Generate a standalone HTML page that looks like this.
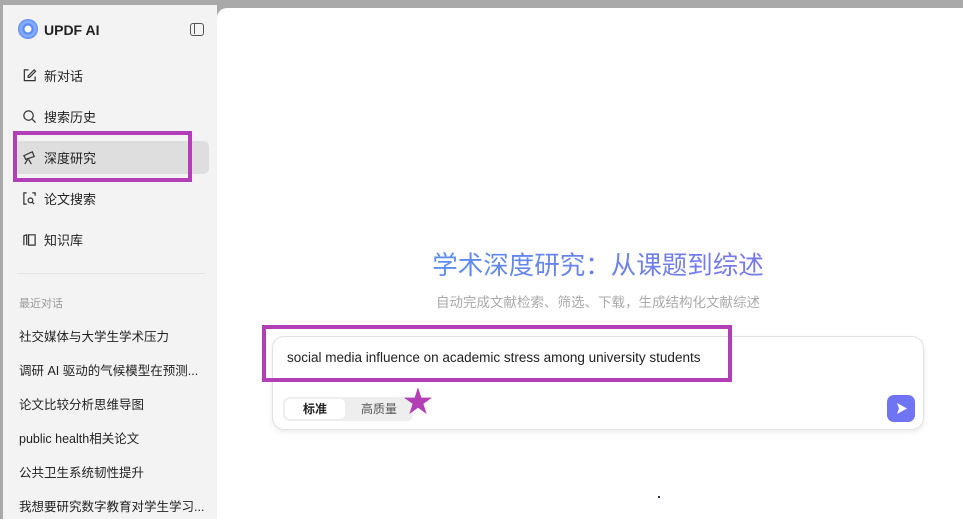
<!DOCTYPE html>
<html><head><meta charset="utf-8"><style>
*{margin:0;padding:0;box-sizing:border-box}
body{width:963px;height:519px;overflow:hidden;background:#a9a9a9;font-family:"Liberation Sans","Noto Sans CJK SC",sans-serif;position:relative}
.side{position:absolute;left:3px;top:5px;width:214px;height:514px;background:#f3f3f4}
.main{position:absolute;left:217px;top:8px;width:746px;height:511px;background:#fff;border-top-left-radius:10px}
.logo{position:absolute;left:15px;top:14px;width:20px;height:20px;border-radius:50%;background:radial-gradient(circle,#fff 0 3px,#4a7ef0 4px,#8fb3ff 7px,#5b8cf5 10px)}
.brand{position:absolute;left:41px;top:17px;font-weight:bold;font-size:14px;color:#222}
.coll{position:absolute;left:187px;top:18px;width:14px;height:13px;border:1.5px solid #555;border-radius:3px}
.coll:after{content:"";position:absolute;left:3px;top:0;width:0;height:10px;border-left:1.2px solid #555}
.item{position:absolute;left:19px;font-size:13px;color:#222;display:flex;align-items:center;gap:7px}
.item svg{width:15px;height:15px}
.sel{position:absolute;left:10px;top:136px;width:196px;height:33px;background:#dedede;border-radius:6px}
.hl{position:absolute;border:4px solid #b23fb5}
.sec{position:absolute;left:16px;top:290px;font-size:11px;color:#999}
.rec{position:absolute;left:16px;font-size:12.5px;color:#222}
.title{position:absolute;left:8px;width:746px;text-align:center;top:237px;font-size:25.5px;background:linear-gradient(90deg,#4a9af0,#8a6ae8);-webkit-background-clip:text;color:transparent}
.sub{position:absolute;left:8px;width:746px;text-align:center;top:283px;font-size:13.5px;color:#aaa}
.box{position:absolute;left:55px;top:328px;width:652px;height:94px;border:1px solid #e2e2e2;border-radius:12px;box-shadow:0 2px 6px rgba(0,0,0,.08);background:#fff}
.q{position:absolute;left:14px;top:13px;font-size:13.5px;color:#222}
.seg{position:absolute;left:10px;top:60px;width:130px;height:24px;background:#eee;border-radius:6px}
.seg .a{position:absolute;left:2px;top:2px;width:60px;height:20px;background:#fff;border-radius:5px;font-size:12px;font-weight:bold;text-align:center;line-height:20px;color:#222}
.seg .b{position:absolute;left:78px;top:2px;font-size:12px;line-height:20px;color:#555}
.send{position:absolute;right:8px;top:58px;width:28px;height:27px;border-radius:7px;background:#6f74f5}
.star{position:absolute;left:403px;top:388px;font-size:30px;color:#b23fb5;line-height:1}
</style></head><body>
<div class="side">
<div class="logo"></div><div class="brand">UPDF AI</div><div class="coll"></div>
<div class="item" style="top:61px"><svg viewBox="0 0 16 16" fill="none" stroke="#333" stroke-width="1.3"><path d="M7 2H2.5v11.5H14V9"/><path d="M13 2l1.5 1.5L8 10H6.5V8.5z"/></svg>新对话</div>
<div class="item" style="top:102px"><svg viewBox="0 0 16 16" fill="none" stroke="#333" stroke-width="1.3"><circle cx="7" cy="7" r="5"/><path d="M11 11l3.5 3.5"/></svg>搜索历史</div>
<div class="sel"></div>
<div class="item" style="top:143px"><svg viewBox="0 0 16 16" fill="none" stroke="#333" stroke-width="1.3"><path d="M2 6l9-4 2 5-9 3z"/><path d="M6 10l-3 5M7 10l3 5"/></svg>深度研究</div>
<div class="item" style="top:184px"><svg viewBox="0 0 16 16" fill="none" stroke="#333" stroke-width="1.3"><path d="M5 2H2v12h3M11 2h3v3"/><circle cx="9" cy="10" r="2.5"/><path d="M11 12l2 2"/></svg>论文搜索</div>
<div class="item" style="top:225px"><svg viewBox="0 0 16 16" fill="none" stroke="#333" stroke-width="1.3"><path d="M2 14V4l3-1v11M7 14V3h7v11z"/></svg>知识库</div>
<div style="position:absolute;left:14px;top:268px;width:188px;border-top:1px solid #e4e4e4"></div>
<div class="sec">最近对话</div>
<div class="rec" style="top:321px">社交媒体与大学生学术压力</div>
<div class="rec" style="top:355px">调研 AI 驱动的气候模型在预测...</div>
<div class="rec" style="top:389px">论文比较分析思维导图</div>
<div class="rec" style="top:423px">public health相关论文</div>
<div class="rec" style="top:457px">公共卫生系统韧性提升</div>
<div class="rec" style="top:491px">我想要研究数字教育对学生学习...</div>
</div>
<div class="hl" style="left:13px;top:131px;width:179px;height:51px"></div>
<div class="main">
<div class="title">学术深度研究：从课题到综述</div>
<div class="sub">自动完成文献检索、筛选、下载，生成结构化文献综述</div>
<div class="box"><div class="q">social media influence on academic stress among university students</div>
<div class="seg"><div class="a">标准</div><div class="b">高质量</div></div>
<div class="send"><svg viewBox="0 0 28 27" width="28" height="27"><path d="M10 8l10 5.5-10 5.5 2-5.5z" fill="#fff"/></svg></div></div>
<div style="position:absolute;left:441px;top:488px;width:2px;height:2px;background:#334"></div>
</div>
<div class="hl" style="left:262px;top:325px;width:470px;height:57px"></div>
<div class="star">★</div>
</body></html>
